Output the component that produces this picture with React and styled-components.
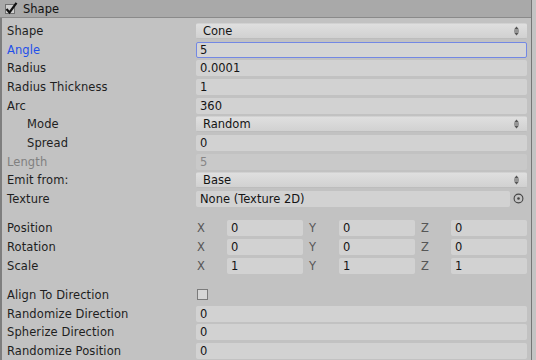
import React from 'react';
import styled, { createGlobalStyle } from 'styled-components';

const GlobalStyle = createGlobalStyle`
  html, body {
    margin: 0;
    padding: 0;
    background: #c4c4c4;
  }
  body {
    font-family: 'DejaVu Sans', Verdana, sans-serif;
    font-size: 11.5px;
    color: #1c1c1c;
  }
`;

const Panel = styled.div`
  width: 531px;
  height: 360px;
  overflow: hidden;
  background: #c2c2c2;
  border-right: 1px solid #767676;
`;

const Header = styled.div`
  height: 17px;
  display: flex;
  align-items: center;
  gap: 5px;
  padding-left: 5px;
  background: #a9a9a9;
  border-bottom: 1px solid #8a8a8a;
  color: #111;
`;

const Body = styled.div`
  border-left: 2px solid #7e7e7e;
  padding: 3.67px 4px 0 5px;
  height: 100%;
`;

const Section = styled.div`
  display: flex;
  flex-direction: column;
  & + & {
    margin-top: 10.17px;
  }
`;

const Row = styled.div`
  display: grid;
  grid-template-columns: 189px 1fr;
  align-items: center;
  height: ${p => p.$h || 18.67}px;
`;

const Label = styled.div`
  padding-left: ${p => (p.$indent ? 20 : 0)}px;
  color: ${p => (p.$focused ? '#1f50ea' : p.$disabled ? '#808080' : '#1e1e1e')};
  white-space: nowrap;
  letter-spacing: 0.1px;
`;

const Field = styled.div`
  box-sizing: border-box;
  height: 16px;
  display: flex;
  align-items: center;
  padding: 0 3px;
  border-radius: 2px;
  white-space: nowrap;
  background: ${p => (p.$disabled ? '#c9c9c9' : p.$focused ? '#d5d5d5' : '#d2d2d2')};
  border: 1px solid ${p => (p.$focused ? '#7388e4' : 'transparent')};
  color: ${p => (p.$disabled ? '#868686' : '#141414')};
`;

const Popup = styled(Field)`
  justify-content: space-between;
  padding: 0 6px 0 6px;
  background: linear-gradient(#dfdfdf, #d1d1d1);
  border-bottom-color: #bdbdbd;
`;

const ObjectRow = styled.div`
  display: flex;
  align-items: center;
`;

const ObjectField = styled(Field)`
  flex: 1;
`;

const Picker = styled.div`
  width: 17px;
  display: flex;
  justify-content: center;
  align-items: center;
`;

const Vector = styled.div`
  display: grid;
  grid-template-columns: repeat(3, 1fr);
  gap: 5px;
`;

const Comp = styled.div`
  display: grid;
  grid-template-columns: 31px 1fr;
  align-items: center;
`;

const Axis = styled.span`
  color: #565656;
  padding-left: 1px;
`;

const Checkbox = styled.div`
  box-sizing: border-box;
  width: 11px;
  height: 11px;
  margin-left: 1px;
  border: 1px solid #7b7b7b;
  background: #d6d6d6;
`;

const HeaderCheck = () => (
  <svg width="13" height="13" viewBox="0 0 13 13">
    <rect x="0.5" y="2.5" width="9" height="9" fill="#d0d0d0" stroke="#707070" />
    <path d="M1.5 7 L4.5 10.5 L11.5 0.8" fill="none" stroke="#111" strokeWidth="2.2" />
  </svg>
);

const PopupArrows = () => (
  <svg width="7" height="10" viewBox="0 0 7 10">
    <path d="M3.5 0.5 L6 3.5 L1 3.5 Z" fill="#555" />
    <rect x="1" y="4.5" width="5" height="1" fill="#555" />
    <path d="M1 6.5 L6 6.5 L3.5 9.5 Z" fill="#555" />
  </svg>
);

const PickerIcon = () => (
  <svg width="11" height="11" viewBox="0 0 11 11">
    <circle cx="5.5" cy="5.5" r="4.4" fill="none" stroke="#444" strokeWidth="1.1" />
    <circle cx="5.5" cy="5.5" r="1.3" fill="#444" />
  </svg>
);

const vectors = [
  { label: 'Position', v: ['0', '0', '0'] },
  { label: 'Rotation', v: ['0', '0', '0'] },
  { label: 'Scale', v: ['1', '1', '1'] },
];

const App = () => (
  <>
    <GlobalStyle />
    <Panel>
      <Header>
        <HeaderCheck />
        <span>Shape</span>
      </Header>
      <Body>
        <Section>
          <Row>
            <Label>Shape</Label>
            <Popup>Cone<PopupArrows /></Popup>
          </Row>
          <Row>
            <Label $focused>Angle</Label>
            <Field $focused>5</Field>
          </Row>
          <Row>
            <Label>Radius</Label>
            <Field>0.0001</Field>
          </Row>
          <Row>
            <Label>Radius Thickness</Label>
            <Field>1</Field>
          </Row>
          <Row>
            <Label>Arc</Label>
            <Field>360</Field>
          </Row>
          <Row>
            <Label $indent>Mode</Label>
            <Popup>Random<PopupArrows /></Popup>
          </Row>
          <Row>
            <Label $indent>Spread</Label>
            <Field>0</Field>
          </Row>
          <Row>
            <Label $disabled>Length</Label>
            <Field $disabled>5</Field>
          </Row>
          <Row>
            <Label>Emit from:</Label>
            <Popup>Base<PopupArrows /></Popup>
          </Row>
          <Row>
            <Label>Texture</Label>
            <ObjectRow>
              <ObjectField>None (Texture 2D)</ObjectField>
              <Picker><PickerIcon /></Picker>
            </ObjectRow>
          </Row>
        </Section>

        <Section>
          {vectors.map(row => (
            <Row key={row.label} $h={19}>
              <Label>{row.label}</Label>
              <Vector>
                {['X', 'Y', 'Z'].map((axis, i) => (
                  <Comp key={axis}>
                    <Axis>{axis}</Axis>
                    <Field>{row.v[i]}</Field>
                  </Comp>
                ))}
              </Vector>
            </Row>
          ))}
        </Section>

        <Section>
          <Row>
            <Label>Align To Direction</Label>
            <Checkbox />
          </Row>
          <Row>
            <Label>Randomize Direction</Label>
            <Field>0</Field>
          </Row>
          <Row>
            <Label>Spherize Direction</Label>
            <Field>0</Field>
          </Row>
          <Row>
            <Label>Randomize Position</Label>
            <Field>0</Field>
          </Row>
        </Section>
      </Body>
    </Panel>
  </>
);

export default App;
